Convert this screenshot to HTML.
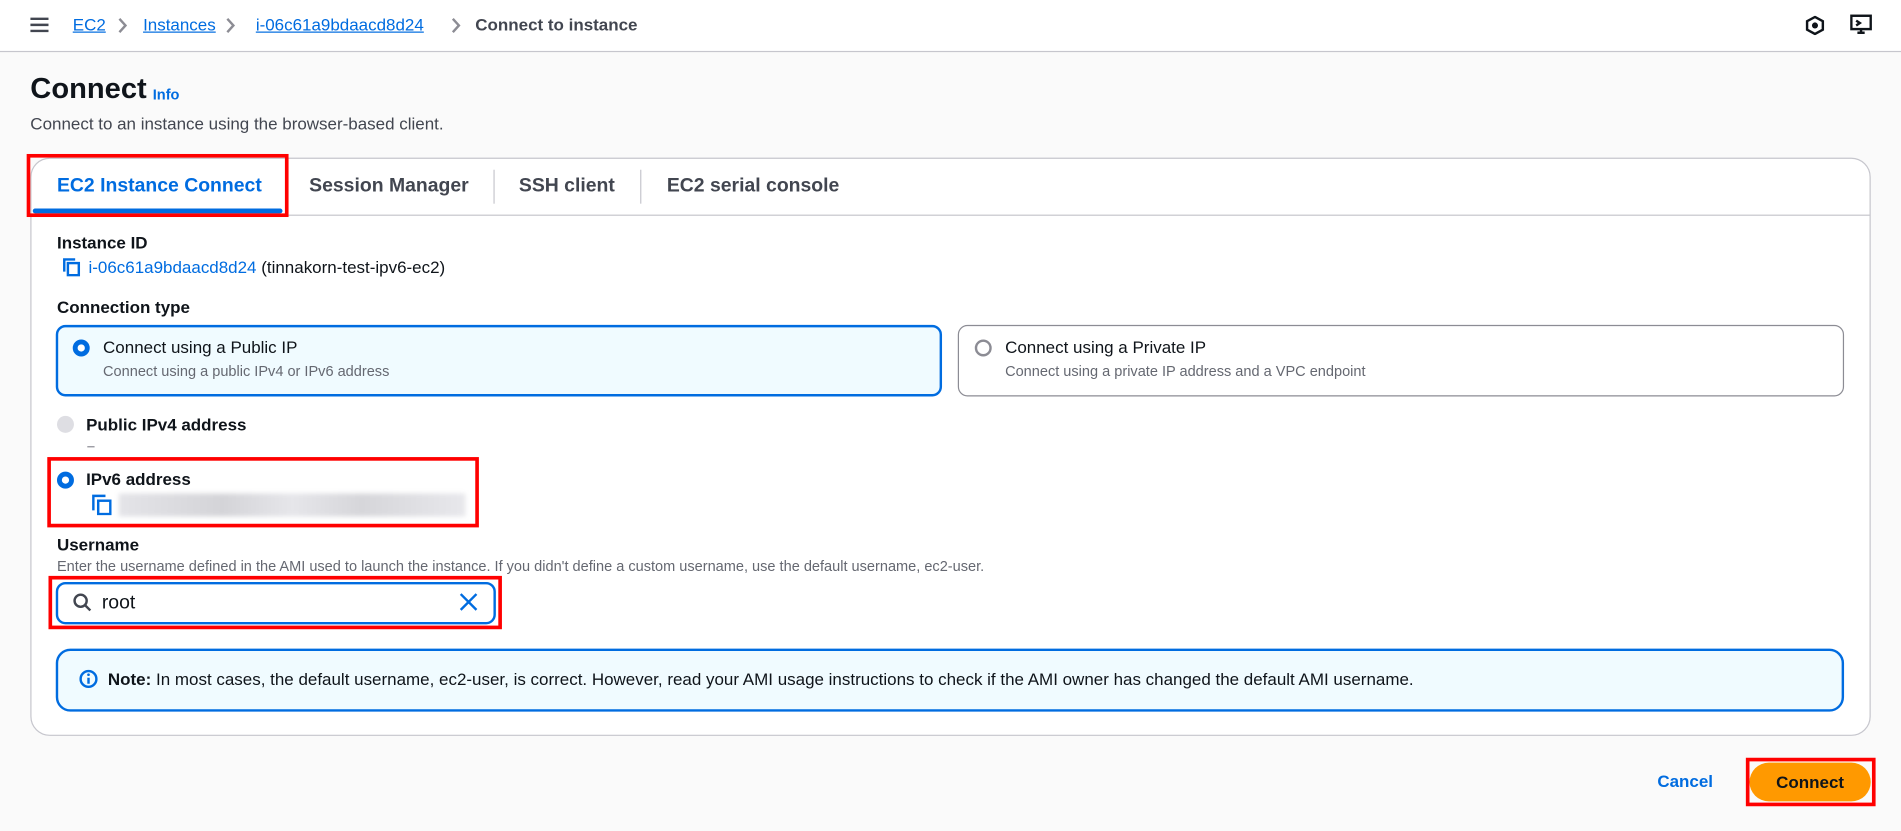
<!DOCTYPE html>
<html><head><meta charset="utf-8"><style>
html,body{margin:0;padding:0;width:1901px;height:830px;overflow:hidden;background:#fafafa}
#w{position:absolute;left:0;top:0;width:1568px;height:685px;transform:scale(1.2124);transform-origin:0 0;font-family:"Liberation Sans",sans-serif;color:#0f141a}
.a{position:absolute;white-space:nowrap}
.hdr{position:absolute;left:0;top:0;width:1568px;height:42px;background:#fff;border-bottom:1px solid #c6c6cd}
.bc{font-size:14px;top:12px}
.bl{color:#006ce0;text-decoration:underline}
.red{position:absolute;border:3px solid #f00;box-sizing:border-box}
.b{font-weight:bold}
.radio{position:absolute;width:14px;height:14px;border-radius:50%;box-sizing:border-box}
.on{border:4px solid #006ce0;background:#fff}
</style></head><body><div id="w">
<div class="hdr">
 <svg class="a" style="left:25px;top:14px" width="15" height="13"><path d="M0 1.5H15M0 6.5H15M0 11.5H15" stroke="#424650" stroke-width="2"/></svg>
 <span class="a bc bl" style="left:60px">EC2</span>
 <svg class="a" style="left:97px;top:14px" width="8" height="14"><path d="M1.5 1.5L6.5 7L1.5 12.5" fill="none" stroke="#8c8c94" stroke-width="2"/></svg>
 <span class="a bc bl" style="left:118px">Instances</span>
 <svg class="a" style="left:186px;top:14px" width="8" height="14"><path d="M1.5 1.5L6.5 7L1.5 12.5" fill="none" stroke="#8c8c94" stroke-width="2"/></svg>
 <span class="a bc bl" style="left:211px">i-06c61a9bdaacd8d24</span>
 <svg class="a" style="left:372px;top:14px" width="8" height="14"><path d="M1.5 1.5L6.5 7L1.5 12.5" fill="none" stroke="#8c8c94" stroke-width="2"/></svg>
 <span class="a bc b" style="left:392px;color:#424650">Connect to instance</span>
 <svg class="a" style="left:1489px;top:13px" width="16" height="16"><path d="M8 1L14.5 4.5V11.5L8 15L1.5 11.5V4.5Z" fill="none" stroke="#0f141a" stroke-width="2"/><circle cx="8" cy="8" r="2.5" fill="#0f141a"/></svg>
 <svg class="a" style="left:1526px;top:12px" width="18" height="17"><rect x="1" y="1" width="16" height="11" fill="none" stroke="#0f141a" stroke-width="2"/><path d="M6 15H12M9 12V15M5 5L8 7L5 9" stroke="#0f141a" stroke-width="2" fill="none"/></svg>
</div>
<div class="a b" style="left:25px;top:60px;font-size:24px">Connect</div>
<div class="a b" style="left:126px;top:71px;font-size:12px;color:#006ce0">Info</div>
<div class="a" style="left:25px;top:94px;font-size:14px;color:#424650">Connect to an instance using the browser-based client.</div>

<div class="a" style="left:25px;top:130px;width:1518px;height:477px;background:#fff;border:1px solid #c6c6cd;border-radius:16px;box-sizing:border-box"></div>
<div class="a" style="left:26px;top:177px;width:1516px;height:1px;background:#c6c6cd"></div>
<div class="a b" style="left:47px;top:145px;font-size:16px;color:#006ce0">EC2 Instance Connect</div>
<div class="a" style="left:27px;top:172px;width:206px;height:4px;background:#006ce0;border-radius:2px"></div>
<div class="a" style="left:236px;top:140px;width:1px;height:28px;background:#c6c6cd"></div>
<div class="a b" style="left:255px;top:145px;font-size:16px;color:#424650">Session Manager</div>
<div class="a" style="left:407px;top:140px;width:1px;height:28px;background:#c6c6cd"></div>
<div class="a b" style="left:428px;top:145px;font-size:16px;color:#424650">SSH client</div>
<div class="a" style="left:528px;top:140px;width:1px;height:28px;background:#c6c6cd"></div>
<div class="a b" style="left:550px;top:145px;font-size:16px;color:#424650">EC2 serial console</div>
<div class="red" style="left:22px;top:127px;width:216px;height:52px"></div>

<div class="a b" style="left:47px;top:192px;font-size:14px">Instance ID</div>
<svg class="a" style="left:51px;top:212px" width="16" height="16"><path d="M2 12V2H11" fill="none" stroke="#006ce0" stroke-width="2"/><rect x="5" y="5" width="9" height="10" fill="none" stroke="#006ce0" stroke-width="2"/></svg>
<div class="a" style="left:73px;top:212px;font-size:14px"><span style="color:#006ce0">i-06c61a9bdaacd8d24</span> (tinnakorn-test-ipv6-ec2)</div>
<div class="a b" style="left:47px;top:245px;font-size:14px">Connection type</div>

<div class="a" style="left:46px;top:268px;width:731px;height:59px;border:2px solid #006ce0;border-radius:8px;background:#f0fbff;box-sizing:border-box"></div>
<div class="radio on" style="left:60px;top:280px"></div>
<div class="a" style="left:85px;top:278px;font-size:14px">Connect using a Public IP</div>
<div class="a" style="left:85px;top:299px;font-size:12px;color:#656871">Connect using a public IPv4 or IPv6 address</div>
<div class="a" style="left:790px;top:268px;width:731px;height:59px;border:1px solid #8c8c94;border-radius:8px;background:#fff;box-sizing:border-box"></div>
<div class="radio" style="left:804px;top:280px;border:2px solid #8c8c94"></div>
<div class="a" style="left:829px;top:278px;font-size:14px">Connect using a Private IP</div>
<div class="a" style="left:829px;top:299px;font-size:12px;color:#656871">Connect using a private IP address and a VPC endpoint</div>

<div class="radio" style="left:47px;top:343px;background:#dedee3"></div>
<div class="a b" style="left:71px;top:342px;font-size:14px">Public IPv4 address</div>
<div class="a" style="left:72px;top:368px;width:6px;height:1px;background:#8c8c94"></div>
<div class="radio on" style="left:47px;top:389px"></div>
<div class="a b" style="left:71px;top:387px;font-size:14px">IPv6 address</div>
<svg class="a" style="left:75px;top:407px" width="17" height="18"><path d="M2 14V2H12" fill="none" stroke="#006ce0" stroke-width="2"/><rect x="6" y="6" width="10" height="11" fill="none" stroke="#006ce0" stroke-width="2"/></svg>
<div class="a" style="left:98px;top:407px;width:286px;height:19px;background:linear-gradient(90deg,#e4e4e8,#d4d4d8 30%,#e6e6ea 50%,#d6d6da 70%,#e8e8ec);filter:blur(2px)"></div>
<div class="red" style="left:39px;top:377px;width:356px;height:58px"></div>

<div class="a b" style="left:47px;top:441px;font-size:14px">Username</div>
<div class="a" style="left:47px;top:460px;font-size:12px;color:#656871">Enter the username defined in the AMI used to launch the instance. If you didn't define a custom username, use the default username, ec2-user.</div>
<div class="a" style="left:46px;top:480px;width:363px;height:35px;border:2px solid #006ce0;border-radius:8px;background:#fff;box-sizing:border-box"></div>
<svg class="a" style="left:60px;top:489px" width="16" height="16"><circle cx="6.5" cy="6.5" r="5" fill="none" stroke="#424650" stroke-width="2"/><path d="M10 10L14.5 14.5" stroke="#424650" stroke-width="2"/></svg>
<div class="a" style="left:84px;top:489px;font-size:16px">root</div>
<svg class="a" style="left:379px;top:489px" width="15" height="15"><path d="M1 1L14 14M14 1L1 14" stroke="#006ce0" stroke-width="2"/></svg>
<div class="red" style="left:40px;top:475px;width:374px;height:44px"></div>

<div class="a" style="left:46px;top:535px;width:1475px;height:52px;border:2px solid #006ce0;border-radius:12px;background:#f0fbff;box-sizing:border-box"></div>
<svg class="a" style="left:65px;top:552px" width="16" height="16"><circle cx="8" cy="8" r="6.5" fill="none" stroke="#006ce0" stroke-width="2"/><path d="M8 7V12" stroke="#006ce0" stroke-width="2"/><circle cx="8" cy="4.5" r="1.1" fill="#006ce0"/></svg>
<div class="a" style="left:89px;top:552px;font-size:14px"><b>Note:</b> In most cases, the default username, ec2-user, is correct. However, read your AMI usage instructions to check if the AMI owner has changed the default AMI username.</div>

<div class="a b" style="left:1367px;top:636px;font-size:14px;color:#006ce0">Cancel</div>
<div class="a b" style="left:1443px;top:629px;width:100px;height:32px;border-radius:16px;background:#ff9900;font-size:14px;text-align:center;line-height:32px">Connect</div>
<div class="red" style="left:1440px;top:625px;width:107px;height:40px"></div>
</div></body></html>
